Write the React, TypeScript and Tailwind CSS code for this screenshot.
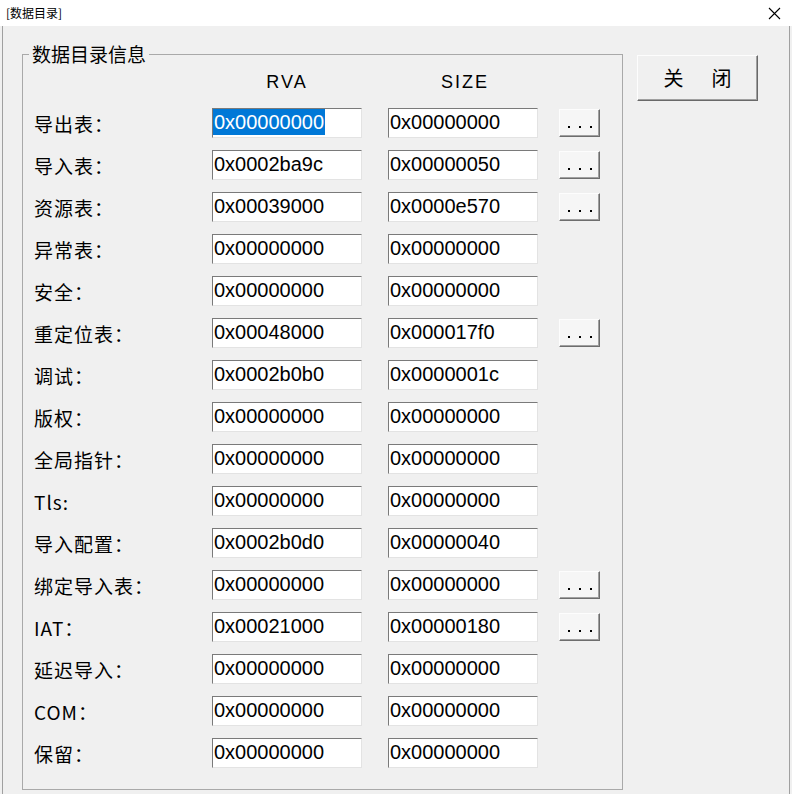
import React from "react";

type Entry = { label: string; rva: string; size: string; more?: boolean };

const ENTRIES: Entry[] = [
  { label: "导出表：", rva: "0x00000000", size: "0x00000000", more: true },
  { label: "导入表：", rva: "0x0002ba9c", size: "0x00000050", more: true },
  { label: "资源表：", rva: "0x00039000", size: "0x0000e570", more: true },
  { label: "异常表：", rva: "0x00000000", size: "0x00000000" },
  { label: "安全：", rva: "0x00000000", size: "0x00000000" },
  { label: "重定位表：", rva: "0x00048000", size: "0x000017f0", more: true },
  { label: "调试：", rva: "0x0002b0b0", size: "0x0000001c" },
  { label: "版权：", rva: "0x00000000", size: "0x00000000" },
  { label: "全局指针：", rva: "0x00000000", size: "0x00000000" },
  { label: "Tls:", rva: "0x00000000", size: "0x00000000" },
  { label: "导入配置：", rva: "0x0002b0d0", size: "0x00000040" },
  { label: "绑定导入表：", rva: "0x00000000", size: "0x00000000", more: true },
  { label: "IAT：", rva: "0x00021000", size: "0x00000180", more: true },
  { label: "延迟导入：", rva: "0x00000000", size: "0x00000000" },
  { label: "COM：", rva: "0x00000000", size: "0x00000000" },
  { label: "保留：", rva: "0x00000000", size: "0x00000000" },
];

const cjk = "font-['Noto_Sans_CJK_SC',sans-serif]";
const mono = "font-['Liberation_Sans','Noto_Sans_CJK_SC',sans-serif]";

function Field({ value, selected }: { value: string; selected?: boolean }) {
  return (
    <div
      className={`flex h-[30px] w-[150px] items-center border border-t-[#7a7a7a] border-l-[#7a7a7a] border-r-[#e3e3e3] border-b-[#e3e3e3] bg-white pb-[3px] text-[20px] leading-none text-black ${mono}`}
    >
      <span className={selected ? "bg-[#0078d7] px-px py-[3px] text-white" : "px-px"}>{value}</span>
    </div>
  );
}

function MoreButton() {
  return (
    <div className="ml-[21px] flex h-[28px] w-[41px] items-end justify-center gap-[9px] border border-t-[#fdfdfd] border-l-[#fdfdfd] border-r-[#6d6d6d] border-b-[#6d6d6d] bg-[#f6f6f6] pb-[8px] shadow-[inset_-1px_-1px_0_#a0a0a0]">
      <span className="h-[2px] w-[2px] bg-black" />
      <span className="h-[2px] w-[2px] bg-black" />
      <span className="h-[2px] w-[2px] bg-black" />
    </div>
  );
}

export default function App() {
  return (
    <div className="flex h-[794px] w-[792px] flex-col overflow-hidden bg-[#f0f0f0] text-black">
      {/* title bar */}
      <div className="flex h-[26px] items-center justify-between bg-white pl-[6px] pr-[11px]">
        <span className={`text-[12px] ${cjk}`}>[数据目录]</span>
        <svg width="13" height="13" viewBox="0 0 13 13" className="text-black">
          <path d="M1 1L12 12M12 1L1 12" stroke="currentColor" strokeWidth="1.1" />
        </svg>
      </div>

      <div className="mx-[2px] flex flex-1 border-x border-[#a0a0a0] pl-[19px]">
        {/* directory group */}
        <fieldset className="mt-[16px] h-[748px] w-[601px] border border-[#a9a9a9] pl-[11px]">
          <legend className={`-ml-[5px] px-[3px] text-[19px] leading-[24px] ${cjk}`}>数据目录信息</legend>

          <div className={`mt-[6px] flex h-[20px] items-center text-[18px] tracking-[2px] ${mono}`}>
            <span className="w-[178px]" />
            <span className="w-[150px] text-center">RVA</span>
            <span className="ml-[26px] w-[150px] pl-[4px] text-center">SIZE</span>
          </div>

          <div className="mt-[16px] flex flex-col gap-[12px]">
            {ENTRIES.map((e, i) => (
              <div key={e.label} className="flex h-[30px] items-center">
                <span className={`w-[178px] pt-[3px] text-[19px] tracking-[1px] ${cjk}`}>{e.label}</span>
                <Field value={e.rva} selected={i === 0} />
                <div className="ml-[26px]">
                  <Field value={e.size} />
                </div>
                {e.more && <MoreButton />}
              </div>
            ))}
          </div>
        </fieldset>

        <div className="ml-[14px] mt-[29px]">
          <button
            className={`flex h-[46px] w-[121px] items-center justify-center gap-[28px] border border-t-[#fdfdfd] border-l-[#fdfdfd] border-r-[#696969] border-b-[#696969] bg-[#f0f0f0] text-[20px] shadow-[inset_-1px_-1px_0_#a0a0a0] ${cjk}`}
          >
            <span>关</span>
            <span>闭</span>
          </button>
        </div>
      </div>
    </div>
  );
}
